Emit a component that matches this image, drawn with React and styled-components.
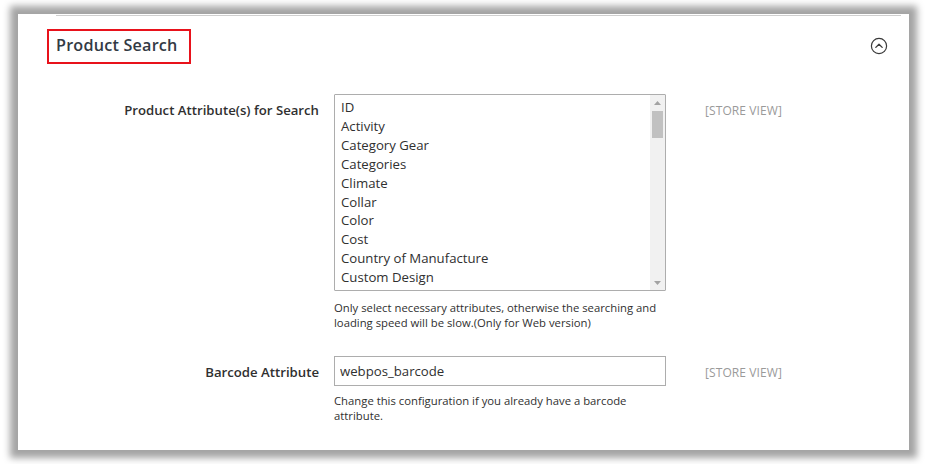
import React from 'react';
import styled, { createGlobalStyle } from 'styled-components';

const GlobalStyle = createGlobalStyle`
  html, body {
    margin: 0;
    padding: 0;
    background: #fff;
  }
  body {
    font-family: "Open Sans", "Liberation Sans", sans-serif;
    color: #303030;
  }
`;

const Page = styled.div`
  width: 928px;
  height: 464px;
  padding: 14px 0 0 18px;
  box-sizing: border-box;
  overflow: hidden;
`;

const Panel = styled.section`
  width: 891px;
  height: 436px;
  background: #fff;
  box-shadow: 0 0 7px 8px rgba(0, 0, 0, 0.36);
  padding-top: 1px;
  box-sizing: border-box;
`;

const Divider = styled.div`
  margin: 0 8px 0 38px;
  border-top: 1px solid #cfcfcf;
`;

const Header = styled.div`
  display: flex;
  align-items: center;
  justify-content: space-between;
  padding: 13px 21px 0 29px;
`;

const Title = styled.h2`
  margin: 0;
  width: 144px;
  height: 35px;
  box-sizing: border-box;
  border: 2px solid #e8121b;
  padding: 0 0 0 7px;
  font-size: 16.2px;
  font-weight: 600;
  line-height: 29px;
  color: #333a44;
  letter-spacing: 0.2px;
`;

const Toggle = styled.button`
  border: 0;
  background: none;
  padding: 0;
  margin-top: -2px;
  width: 18px;
  height: 18px;
  display: flex;
  cursor: pointer;
`;

const Form = styled.div`
  display: flex;
  flex-direction: column;
  gap: 26px;
  padding-top: 30px;
`;

const Row = styled.div`
  display: grid;
  grid-template-columns: 301px 332px auto;
  column-gap: 15px;
  align-items: start;
`;

const Label = styled.label`
  text-align: right;
  font-size: 13.2px;
  font-weight: 600;
  line-height: 19px;
  padding-top: ${(p) => p.$top}px;
  color: #303030;
`;

const Control = styled.div`
  display: flex;
  flex-direction: column;
`;

const ListBox = styled.div`
  display: flex;
  height: 197px;
  box-sizing: border-box;
  border: 1px solid #adadad;
  border-radius: 1px;
  background: #fff;
`;

const Options = styled.ul`
  flex: 1;
  list-style: none;
  margin: 0;
  padding: 3px 0 0 6px;
  overflow: hidden;
`;

const Option = styled.li`
  font-size: 13.2px;
  line-height: 18.9px;
  color: #303030;
  white-space: nowrap;
`;

const ScrollBar = styled.div`
  width: 15px;
  display: flex;
  flex-direction: column;
  background: #f1f1f1;
`;

const Arrow = styled.div`
  height: 15px;
  display: flex;
  align-items: center;
  justify-content: center;
`;

const Track = styled.div`
  flex: 1;
  padding: 1px 2px;
`;

const Thumb = styled.div`
  height: 27px;
  background: #c1c1c1;
`;

const TextInput = styled.input`
  height: 30px;
  box-sizing: border-box;
  border: 1px solid #adadad;
  padding: 0 5px;
  font-family: inherit;
  font-size: 13.2px;
  color: #303030;
  outline: none;
`;

const Note = styled.p`
  margin: ${(p) => p.$gap}px 0 0;
  font-size: 11.3px;
  line-height: 15px;
  color: #303030;
`;

const Scope = styled.span`
  margin-left: 24px;
  padding-top: ${(p) => p.$top}px;
  font-size: 12px;
  line-height: 15px;
  color: #9a9a9a;
  letter-spacing: 0.1px;
`;

const attributes = [
  'ID',
  'Activity',
  'Category Gear',
  'Categories',
  'Climate',
  'Collar',
  'Color',
  'Cost',
  'Country of Manufacture',
  'Custom Design',
];

function CollapseIcon() {
  return (
    <svg width="18" height="18" viewBox="0 0 18 18" fill="none">
      <circle cx="9" cy="9" r="7.6" stroke="#3a3a3a" strokeWidth="1.2" />
      <path d="M5.8 10.4 L9 7.2 L12.2 10.4" stroke="#3a3a3a" strokeWidth="1.3" strokeLinecap="round" strokeLinejoin="round" />
    </svg>
  );
}

function Triangle({ down }) {
  return (
    <svg width="7" height="4" viewBox="0 0 7 4">
      <path d={down ? 'M0 0 H7 L3.5 4 Z' : 'M0 4 H7 L3.5 0 Z'} fill="#a3a3a3" />
    </svg>
  );
}

export default function App() {
  return (
    <>
      <GlobalStyle />
      <Page>
        <Panel>
          <Divider />
          <Header>
            <Title>Product Search</Title>
            <Toggle aria-label="collapse">
              <CollapseIcon />
            </Toggle>
          </Header>
          <Form>
            <Row>
              <Label $top={7}>Product Attribute(s) for Search</Label>
              <Control>
                <ListBox>
                  <Options>
                    {attributes.map((a) => (
                      <Option key={a}>{a}</Option>
                    ))}
                  </Options>
                  <ScrollBar>
                    <Arrow><Triangle /></Arrow>
                    <Track><Thumb /></Track>
                    <Arrow><Triangle down /></Arrow>
                  </ScrollBar>
                </ListBox>
                <Note $gap={9}>
                  Only select necessary attributes, otherwise the searching and loading speed will be slow.(Only for Web version)
                </Note>
              </Control>
              <Scope $top={9}>[STORE VIEW]</Scope>
            </Row>
            <Row>
              <Label $top={7}>Barcode Attribute</Label>
              <Control>
                <TextInput defaultValue="webpos_barcode" />
                <Note $gap={7}>
                  Change this configuration if you already have a barcode attribute.
                </Note>
              </Control>
              <Scope $top={9}>[STORE VIEW]</Scope>
            </Row>
          </Form>
        </Panel>
      </Page>
    </>
  );
}
